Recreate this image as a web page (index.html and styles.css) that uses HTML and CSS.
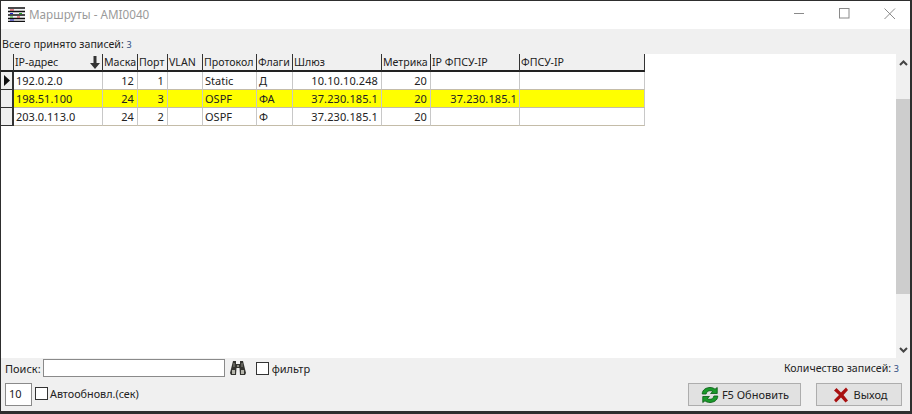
FILE: index.html
```html
<!DOCTYPE html>
<html lang="ru">
<head>
<meta charset="utf-8">
<title>Маршруты - AMI0040</title>
<link rel="stylesheet" href="styles.css">
</head>
<body>
<div class="window">
  <header class="titlebar">
    <svg class="app-icon" width="17" height="15" viewBox="0 0 17 15">
      <rect width="17" height="15" fill="#f4f4f8"/>
      <path d="M0 1h17M0 4.500h17M0 8h17M0 11.500h17M0 14.500h17" stroke="#111" stroke-width="1.500"/>
      <path d="M2 3h4M9 10h3" stroke="#c22" stroke-width="1"/>
      <path d="M2 6.500h3M2 13h4" stroke="#22c" stroke-width="1"/>
      <path d="M2 10h3M11 6.500h3" stroke="#2a2" stroke-width="1"/>
    </svg>
    <span class="title">Маршруты - AMI0040</span>
    <div class="win-controls">
      <svg width="12" height="12" viewBox="0 0 12 12"><path d="M0 5.500h10" stroke="#8a8a8a"/></svg>
      <svg width="12" height="12" viewBox="0 0 12 12"><rect x=".5" y=".5" width="9.500" height="9.500" fill="none" stroke="#8a8a8a"/></svg>
      <svg width="12" height="12" viewBox="0 0 12 12"><path d="M.5 .5l10.500 10.500M11 .5L.5 11" stroke="#8a8a8a"/></svg>
    </div>
  </header>

  <div class="summary">Всего принято записей: <span class="count">3</span></div>

  <div class="grid-area">
    <div class="grid">
      <div class="row head">
        <div class="cell ind"></div>
        <div class="cell sort">IP-адрес
          <svg width="10" height="13" viewBox="0 0 10 13"><path d="M3.500 0h3v7H10L5 13 0 7h3.500z" fill="#333"/></svg>
        </div>
        <div class="cell">Маска</div>
        <div class="cell">Порт</div>
        <div class="cell">VLAN</div>
        <div class="cell">Протокол</div>
        <div class="cell">Флаги</div>
        <div class="cell">Шлюз</div>
        <div class="cell">Метрика</div>
        <div class="cell">IP ФПСУ-IP</div>
        <div class="cell">ФПСУ-IP</div>
      </div>
      <div class="row">
        <div class="cell ind"><svg width="6" height="11" viewBox="0 0 6 11"><path d="M0 0l6 5.500L0 11z" fill="#111"/></svg></div>
        <div class="cell">192.0.2.0</div>
        <div class="cell num">12</div>
        <div class="cell num">1</div>
        <div class="cell"></div>
        <div class="cell">Static</div>
        <div class="cell">Д</div>
        <div class="cell num">10.10.10.248</div>
        <div class="cell num">20</div>
        <div class="cell"></div>
        <div class="cell"></div>
      </div>
      <div class="row hl">
        <div class="cell ind"></div>
        <div class="cell">198.51.100</div>
        <div class="cell num">24</div>
        <div class="cell num">3</div>
        <div class="cell"></div>
        <div class="cell">OSPF</div>
        <div class="cell">ФА</div>
        <div class="cell num">37.230.185.1</div>
        <div class="cell num">20</div>
        <div class="cell num tight">37.230.185.1</div>
        <div class="cell"></div>
      </div>
      <div class="row">
        <div class="cell ind"></div>
        <div class="cell">203.0.113.0</div>
        <div class="cell num">24</div>
        <div class="cell num">2</div>
        <div class="cell"></div>
        <div class="cell">OSPF</div>
        <div class="cell">Ф</div>
        <div class="cell num">37.230.185.1</div>
        <div class="cell num">20</div>
        <div class="cell"></div>
        <div class="cell"></div>
      </div>
    </div>
    <div class="scrollbar">
      <svg width="9" height="6" viewBox="0 0 9 6"><path d="M1 5l3.500-3.500L8 5" fill="none" stroke="#444" stroke-width="2"/></svg>
      <div class="thumb"></div>
      <svg width="9" height="6" viewBox="0 0 9 6"><path d="M1 1l3.500 3.500L8 1" fill="none" stroke="#444" stroke-width="2"/></svg>
    </div>
  </div>

  <div class="search-row">
    <span>Поиск:</span>
    <div class="input search"></div>
    <svg class="binoculars" width="16" height="14" viewBox="0 0 16 14">
      <path d="M3 0h3v3h4V0h3l1 4 2 8-1 2H10L9.500 7h-3L6 14H1L0 12l2-8z" fill="#33332f"/>
      <path d="M2 9h3v4H2zM11 9h3v4h-3z" fill="#b4b4aa"/>
      <path d="M7 4h2v2H7zM3.500 2h1v4h-1zM11.500 2h1v4h-1z" fill="#8a8a80"/>
    </svg>
    <span class="check"></span>
    <span class="filter-label">фильтр</span>
    <span class="records">Количество записей: <span class="count">3</span></span>
  </div>

  <div class="action-row">
    <div class="input seconds">10</div>
    <span class="check"></span>
    <span class="auto-label">Автообновл.(сек)</span>
    <button class="btn refresh">
      <svg width="20" height="18" viewBox="0 0 18 18" preserveAspectRatio="none">
        <path d="M2 8C2 3.500 6 1.500 9 1.500c2 0 3.500.7 4.500 1.700L15.500 1.500V7.500H9.500l2-2C10.800 4.900 10 4.700 9 4.700 7.300 4.700 5.800 6 5.500 8z" fill="#1a9a2a" stroke="#0c5c18" stroke-width=".8"/>
        <path d="M16 10c0 4.500-4 6.500-7 6.500-2 0-3.500-.7-4.500-1.700L2.500 16.500V10.500h6l-2 2c.7.600 1.500.8 2.500.8 1.700 0 3.200-1.300 3.500-3.300z" fill="#1a9a2a" stroke="#0c5c18" stroke-width=".8"/>
      </svg>
      <span>F5 Обновить</span>
    </button>
    <button class="btn exit">
      <svg width="16" height="16" viewBox="0 0 16 16"><path d="M1 3.500L3.500 1 8 5.500 13 .5 15 3l-4.500 5 4.500 5.500L12.500 15.500 8 10.500 3 15.500 1 13l5-5z" fill="#a81010"/></svg>
      <span>Выход</span>
    </button>
  </div>
</div>
</body>
</html>
```
FILE: styles.css
```css
* { box-sizing: border-box; }
html, body { margin: 0; padding: 0; }
body {
  width: 912px;
  height: 414px;
  overflow: hidden;
  font-family: "Noto Sans", "Liberation Sans", sans-serif;
  font-size: 11px;
  color: #222;
}
.window {
  width: 912px;
  height: 414px;
  display: flex;
  flex-direction: column;
  background: #f0f0f0;
  border: solid #2e2e2e;
  border-width: 1px 2px 3px 1px;
}
.titlebar {
  height: 28px;
  flex: none;
  display: flex;
  align-items: center;
  background: #fff;
  padding: 0 0 2px 7px;
}
.title {
  margin-left: 4px;
  font-size: 11.700px;
  color: #9a9a9a;
}
.win-controls {
  margin-left: auto;
  display: flex;
  align-items: center;
  gap: 33px;
  padding-right: 14px;
}
.summary {
  height: 25px;
  flex: none;
  padding: 8px 0 0 1px;
  font-size: 10.600px;
  line-height: 15px;
}
.count { color: #2a4a80; font-size: 9px; }
.grid-area {
  height: 304px;
  flex: none;
  display: flex;
  background: #fff;
}
.grid { flex: 1; min-width: 0; }
.row {
  display: grid;
  grid-template-columns: 13px 89px 35px 30px 35px 54px 36px 89px 49px 89px 125px;
  height: 18px;
  width: 644px;
}
.cell {
  border-right: 1px solid #c8c8c8;
  border-bottom: 1px solid #c4bca8;
  padding: 0 2px;
  line-height: 17px;
  overflow: hidden;
  white-space: nowrap;
}
.cell.num { text-align: right; padding-right: 3px; letter-spacing: .1px; }
.cell.tight { padding-right: 2px; }
.row .ind {
  padding: 0;
  background: #f0f0f0;
  border-right: 2px solid #333;
  border-bottom: 1px solid #333;
  display: flex;
  align-items: center;
  justify-content: center;
}
.head .cell {
  background: #f0f0f0;
  border-right: 1px solid #333;
  border-bottom: 2px solid #222;
  padding: 0 1px;
  line-height: 16px;
  font-size: 10.600px;
}
.head .sort {
  display: flex;
  align-items: center;
  justify-content: space-between;
  padding-right: 2px;
}
.hl .cell { background: #ffff00; }
.hl .ind { background: #f0f0f0; }
.scrollbar {
  width: 14px;
  flex: none;
  padding: 6px 0 5px;
  background: #f0f0f0;
  display: flex;
  flex-direction: column;
  align-items: center;
}
.thumb {
  width: 100%;
  height: 195px;
  margin-top: 33px;
  margin-bottom: auto;
  background: #cdcdcd;
}
.search-row {
  height: 20px;
  flex: none;
  display: flex;
  align-items: center;
  padding: 0 11px 0 4px;
}
.input {
  background: #fff;
  border: 1px solid #8a8a8a;
}
.search { width: 182px; height: 18px; margin-left: 2px; }
.binoculars { margin-left: 5px; }
.check {
  width: 13px;
  height: 13px;
  flex: none;
  background: #fff;
  border: 1px solid #333;
  margin-left: 10px;
}
.filter-label { margin-left: 3px; }
.records { margin-left: auto; font-size: 10.600px; }
.action-row {
  flex: 1;
  display: flex;
  align-items: flex-start;
  padding: 5px 8px 0 4px;
}
.seconds {
  width: 27px;
  height: 23px;
  padding-left: 3px;
  line-height: 19px;
}
.action-row .check { margin: 4px 0 0 3px; }
.auto-label { margin: 3px 0 0 2px; font-size: 10.800px; }
.btn {
  height: 23px;
  display: flex;
  align-items: center;
  justify-content: center;
  gap: 2px;
  background: #e1e1e1;
  border: 1px solid #adadad;
  font: inherit;
  color: #222;
  padding: 0;
}
.refresh { width: 113px; margin-left: auto; }
.exit { width: 86px; margin-left: 15px; gap: 4px; padding-left: 3px; }
```
